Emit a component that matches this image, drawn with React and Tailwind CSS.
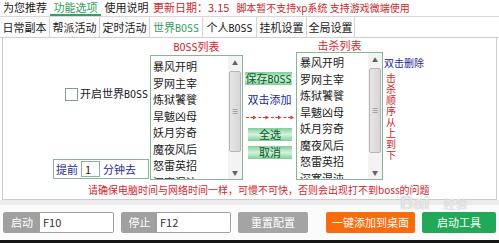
import React from 'react';

const bossNames = ['暴风开明', '罗网主宰', '炼狱饕餮', '旱魃凶母', '妖月穷奇', '魔夜风后', '怒雷英招', '深寒混沌'];

const tabs = ['日常副本', '帮派活动', '定时活动', '世界', '个人', '挂机设置', '全局设置'];
const tabWidths = ['w-[50px]', 'w-[50px]', 'w-[50px]', 'w-[53px]', 'w-[54px]', 'w-[50px]', 'w-[48px]'];

// narrow latin like the old bitmap font
const Boss = () => <span className="font-['DejaVu_Sans_Mono',monospace] text-[10px]">BOSS</span>;

// scrollbar of the old style list boxes
const ScrollBar = ({ gap, thumb }) => (
    <div className="w-[14px] h-full bg-[#f3f3f3] flex flex-col items-center">
        <div className="h-[13px] text-[6px] leading-[13px] text-[#606060]">▲</div>
        <div className={`${gap} ${thumb} w-[12px] rounded-[2px] border border-[#b4b4b4] bg-gradient-to-r from-[#e6e6e6] to-[#d6d6d6] flex items-center justify-center`}>
            <span className="text-[7px] leading-none text-[#777]">≡</span>
        </div>
        <div className="mt-auto h-[13px] text-[6px] leading-[13px] text-[#606060]">▼</div>
    </div>
);

const ListBox = ({ className, pad, gap, thumb }) => (
    <div className={`${className} border border-[#86b59a] bg-white flex overflow-hidden`}>
        <div className={`flex-1 ${pad} text-[11px] leading-[16.5px] text-[#1a1a1a] whitespace-nowrap overflow-hidden`}>
            {bossNames.map(n => <div key={n}>{n}</div>)}
        </div>
        <ScrollBar gap={gap} thumb={thumb} />
    </div>
);

const GreenBar = ({ children, className }) => (
    <div className={`${className} h-[13px] bg-gradient-to-b from-[#7fcf98] via-[#d4f2dd] to-[#7fcf98] text-[11px] leading-[13px] text-center text-[#0d5a2b] whitespace-nowrap`}>
        {children}
    </div>
);

const Arrows = () => (
    <svg width="50" height="7" viewBox="0 0 50 7">
        {[0, 12.5, 25, 37.5].map(x => (
            <g key={x} stroke="#d33a3a" fill="#d33a3a" strokeWidth="1">
                <line x1={x + 1} y1="3.5" x2={x + 9} y2="3.5" strokeDasharray="3 1.5" />
                <path d={`M${x + 8} 1.5 L${x + 11.5} 3.5 L${x + 8} 5.5 Z`} stroke="none" />
            </g>
        ))}
    </svg>
);

const App = () => {
    return (
        <div className="w-[499px] h-[243px] bg-white overflow-hidden relative font-['Noto_Sans_CJK_SC','Liberation_Sans',sans-serif] text-[#1a1a1a]">
            {/* top navigation */}
            <div className="h-[17px] flex items-stretch text-[11px] leading-[15px] border-b border-[#d8d8d8] whitespace-nowrap">
                <span className="w-[50px] text-center">为您推荐</span>
                <span className="w-[51px] text-center text-[#2f9a5a] border-b-2 border-[#3a9d63]">功能选项</span>
                <span className="w-[51px] text-center">使用说明</span>
                <span className="ml-[1px] text-[#d1262b]">更新日期：3.15</span>
                <span className="ml-[7px] text-[#d1262b] text-[10px]">脚本暂不支持xp系统 支持游戏微端使用</span>
            </div>

            {/* sub tabs */}
            <div className="h-[21px] flex border-b border-[#cfcfcf] text-[11px] leading-[20px] whitespace-nowrap">
                {tabs.map((t, i) => (
                    <div
                        key={t}
                        className={`${tabWidths[i]} text-center border-r border-[#d4d4d4] ${i === 3 ? 'text-[#3a9d63] bg-white' : 'bg-[#fcfcfc]'}`}
                    >
                        {t}{(i === 3 || i === 4) && <Boss />}
                    </div>
                ))}
            </div>

            {/* content panel */}
            <div className="mx-[2px] h-[162px] border-x border-b border-[#cdcdcd] flex flex-col">
                <div className="h-[144px] flex">
                    {/* left column */}
                    <div className="w-[147px] flex flex-col">
                        <div className="mt-[49px] pl-[62px] flex items-center whitespace-nowrap">
                            <div className="w-[13px] h-[13px] border border-[#7f9f8e] bg-white" />
                            <span className="ml-[2px] text-[11px] leading-[13px]">开启世界<Boss /></span>
                        </div>
                        <div className="mt-[58px] ml-[50px] w-[96px] h-[20px] border border-[#86b59a] flex items-center text-[11px] text-[#1c2a9a] whitespace-nowrap">
                            <span className="ml-[2px]">提前</span>
                            <div className="ml-[3px] w-[19px] h-[16px] border border-[#86b59a] text-[#1a1a1a] leading-[14px] pl-[3px]">1</div>
                            <span className="ml-[3px]">分钟去</span>
                        </div>
                    </div>

                    {/* boss list */}
                    <div className="w-[93px] flex flex-col">
                        <div className="h-[15px] mt-[1px] text-[11px] leading-[15px] text-center text-[#d1262b]"><Boss />列表</div>
                        <ListBox className="mt-[1px] h-[125px]" pad="pl-[2px] pt-[2px]" gap="mt-[2px]" thumb="h-[81px]" />
                    </div>

                    {/* middle buttons */}
                    <div className="w-[53px] flex flex-col">
                        <GreenBar className="mt-[34px] ml-[2px] w-[47px]">保存<Boss /></GreenBar>
                        <div className="mt-[7px] text-[11px] leading-[14px] text-center text-[#1c2a9a] whitespace-nowrap">双击添加</div>
                        <div className="mt-[8px] flex justify-center"><Arrows /></div>
                        <GreenBar className="mt-[7px] ml-[5px] w-[44px]">全选</GreenBar>
                        <GreenBar className="mt-[5px] ml-[5px] w-[44px]">取消</GreenBar>
                    </div>

                    {/* kill list */}
                    <div className="w-[87px] flex flex-col">
                        <div className="h-[14px] text-[11px] leading-[14px] text-center text-[#d1262b]">击杀列表</div>
                        <ListBox className="h-[128px]" pad="pl-[3px] pt-[1px]" gap="mt-[2px]" thumb="h-[85px]" />
                    </div>

                    {/* right notes */}
                    <div className="flex flex-col pl-[1px]">
                        <div className="mt-[18px] text-[10px] leading-[14px] text-[#1c2a9a] whitespace-nowrap">双击删除</div>
                        <div className="mt-[2px] ml-[2px] flex flex-col text-[10px] leading-[11px] text-[#d1262b]">
                            {'击杀顺序从上到下'.split('').map((c, i) => <span key={i} className="h-[11px]">{c}</span>)}
                        </div>
                    </div>
                </div>
                <div className="pl-[85px] text-[10px] leading-[16px] text-[#d1262b] whitespace-nowrap">
                    请确保电脑时间与网络时间一样，可慢不可快，否则会出现打不到boss的问题
                </div>
            </div>

            {/* bottom bar */}
            <div className="h-[5px] bg-[#ececec]" />
            <div className="h-[35px] bg-[#fbfbfb] flex items-start pt-[7px] pl-[3px] text-[11px] leading-[21px] text-white whitespace-nowrap">
                <div className="flex h-[21px] rounded-[2px] overflow-hidden border border-[#a0a0a0]">
                    <div className="w-[36px] bg-[#a0a0a0] text-center leading-[19px]">启动</div>
                    <div className="w-[73px] bg-white text-[#333] pl-[3px] leading-[19px]">F10</div>
                </div>
                <div className="ml-[7px] flex h-[21px] rounded-[2px] overflow-hidden border border-[#a0a0a0]">
                    <div className="w-[35px] bg-[#a0a0a0] text-center leading-[19px]">停止</div>
                    <div className="w-[73px] bg-white text-[#333] pl-[3px] leading-[19px]">F12</div>
                </div>
                <div className="ml-[7px] w-[70px] h-[21px] rounded-[2px] bg-[#a4a4a4] text-center">重置配置</div>
                <div className="ml-[18px] w-[89px] h-[21px] rounded-[2px] bg-[#f96b0d] text-center">一键添加到桌面</div>
                <div className="ml-[7px] w-[74px] h-[21px] rounded-[2px] bg-[#21a957] text-center">启动工具</div>
            </div>
            <div className="h-[3px] bg-[#161616]" />

            {/* watermark */}
            <div className="absolute left-[400px] top-[193px] text-[19px] font-bold leading-none text-white/70 font-['Liberation_Sans',sans-serif] [text-shadow:0_0_1px_#a8a8a8] pointer-events-none">
                Bai<span className="text-[12px] ml-[14px] font-normal font-['Noto_Sans_CJK_SC',sans-serif]">经验</span>
            </div>
        </div>
    );
};

export default App;
